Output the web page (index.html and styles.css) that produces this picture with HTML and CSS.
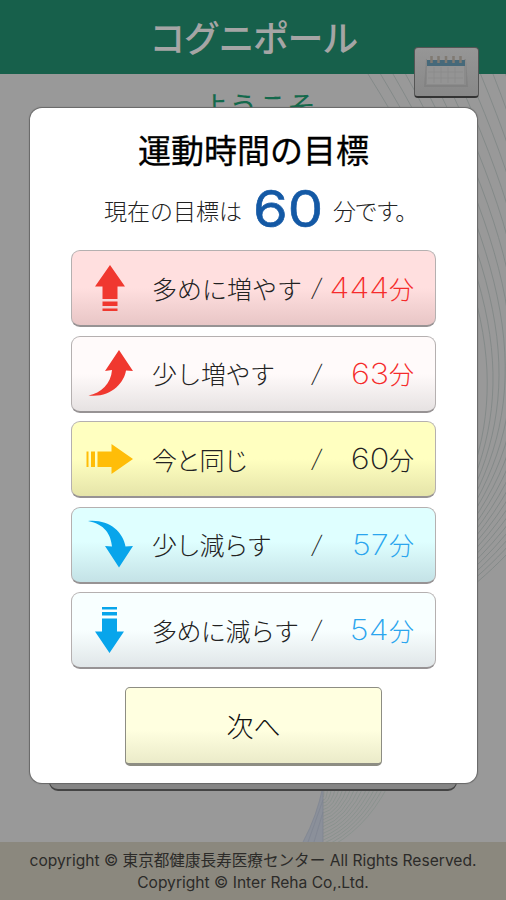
FILE: index.html
```html
<!DOCTYPE html>
<html lang="ja">
<head>
  <meta charset="utf-8">
  <title>コグニポール</title>
  <link rel="stylesheet" href="styles.css">
</head>
<body>
  <div class="screen">
    <header class="header">
      <h1 class="app-title">コグニポール</h1>
    </header>
    <main class="main">
      <svg class="waves" width="506" height="768" viewBox="0 74 506 768" fill="none">
        <g id="waves-side" stroke="#848a89" stroke-width="1"></g>
        <g id="waves-bottom" stroke="#87908c" stroke-width="0.8"></g>
        <path d="M323 786Q317 816 303 842H323Z" fill="#8b909a"/>
        <path d="M323 786Q317 816 303 842M323 786V842M323 800L308 842M323 812L314 842" stroke="#7e8490" stroke-width="0.7"/>
      </svg>
      <p class="welcome">ようこそ</p>
      <div class="back-button"></div>
    </main>
    <footer class="footer">
      <p class="copy">copyright © 東京都健康長寿医療センター All Rights Reserved.</p>
      <p class="copy">Copyright © Inter Reha Co,.Ltd.</p>
    </footer>

    <div class="calendar-button">
      <svg width="52" height="38" viewBox="0 0 52 38">
        <path d="M6 7H46L48 35H4Z" fill="#7d7d7d" opacity="0.6"/>
        <path d="M7 6H43L46 9V33H6Z" fill="#8b8b8b"/>
        <path d="M7 6H44V32H7Z" fill="#949494"/>
        <path d="M7 8H45V14H7Z" fill="#46697a"/>
        <path d="M8 20H43M8 26H43M14 15V31M21 15V31M28 15V31M35 15V31" stroke="#8c8c8c" stroke-width="0.8"/>
        <path d="M11.500 4V11M18.500 4V11M26 4V11M33.500 4V11M40.500 4V11" stroke="#807a72" stroke-width="2.500"/>
      </svg>
    </div>

    <section class="modal">
      <h2 class="modal-title">運動時間の目標</h2>
      <div class="current">
        <span class="current-before">現在の目標は</span>
        <span class="current-value">60</span>
        <span class="current-after">分です。</span>
      </div>

      <div class="options">
        <button class="option more-much">
          <svg class="arrow" width="52" height="54" viewBox="0 0 52 54">
            <path d="M27 4L42 25.500H34.500V38H19.500V25.500H12ZM19.500 40.500H34.500V45H19.500ZM19.500 47.500H34.500V50H19.500Z"/>
          </svg>
          <span class="label">多めに増やす</span><span class="slash">/</span>
          <span class="minutes"><span class="num">444</span>分</span>
        </button>
        <button class="option more-little">
          <svg class="arrow" width="52" height="54" viewBox="0 0 52 54">
            <path d="M36 4L50 25L43 24.500C41 37 28 52 5.500 49.500C18 47 28 38 29 24L22 25Z"/>
          </svg>
          <span class="label">少し増やす</span><span class="slash">/</span>
          <span class="minutes"><span class="num">63</span>分</span>
        </button>
        <button class="option same">
          <svg class="arrow" width="52" height="54" viewBox="0 0 52 54">
            <path d="M3.500 19.500H5.500V35H3.500ZM8 19.500H12V35H8ZM14.500 19.500H28.500V12L50 27L28.500 42V35H14.500Z"/>
          </svg>
          <span class="label">今と同じ</span><span class="slash">/</span>
          <span class="minutes"><span class="num">60</span>分</span>
        </button>
        <button class="option less-little">
          <svg class="arrow" width="52" height="54" viewBox="0 0 52 54">
            <path d="M5 4C25 2 40 14 42.500 29.500L50 29L36 50.500L22 29L29 29.500C28 18 22 7 5 4Z"/>
          </svg>
          <span class="label">少し減らす</span><span class="slash">/</span>
          <span class="minutes"><span class="num">57</span>分</span>
        </button>
        <button class="option less-much">
          <svg class="arrow" width="52" height="54" viewBox="0 0 52 54">
            <path d="M19 4H34V6.500H19ZM19 9H34V12.500H19ZM19 15.500H34V28.500H41L26.500 50L12 28.500H19Z"/>
          </svg>
          <span class="label">多めに減らす</span><span class="slash">/</span>
          <span class="minutes"><span class="num">54</span>分</span>
        </button>
      </div>

      <button class="next">次へ</button>
    </section>
  </div>

  <script>
    // Draw the fans of thin lines in the page background
    function addLines(id, count, makePath) {
      const group = document.getElementById(id);
      for (let i = 0; i < count; i++) {
        const path = document.createElementNS('http://www.w3.org/2000/svg', 'path');
        path.setAttribute('d', makePath(i));
        group.appendChild(path);
      }
    }

    addLines('waves-side', 18, i => {
      const x = 368 + i * 12.5;
      return `M${x} 74C${x + 135 - i * 5} ${290} ${510 + i * 7} ${400 + i * 4} 455 ${515 + i * 5}`;
    });
    addLines('waves-bottom', 17, i => {
      return `M${324 + i * 4} 786Q${324 + i * 2.5} ${800 + i * 2} 323 ${796 + i * 3.4}`;
    });
  </script>
</body>
</html>
```

FILE: styles.css
```css
* {
  margin: 0;
  padding: 0;
  box-sizing: border-box;
}

body {
  font-family: 'Noto Sans CJK JP', sans-serif;
  font-weight: 300;
  color: #222;
}

.screen {
  position: relative;
  width: 506px;
  height: 900px;
  display: flex;
  flex-direction: column;
  overflow: hidden;
  background: #999;
}

.header {
  height: 74px;
  background: #17604b;
  text-align: center;
}

.app-title {
  font-size: 36px;
  font-weight: 500;
  line-height: 72px;
  letter-spacing: -1.4px;
  color: #a5a5a5;
}

.main {
  position: relative;
  flex: 1;
  display: flex;
  flex-direction: column;
  align-items: center;
}

.waves {
  position: absolute;
  top: 0;
  left: 0;
}

.welcome {
  position: relative;
  padding-left: 10px;
  font-size: 29px;
  font-weight: 400;
  line-height: 62px;
  color: #14694c;
}

.back-button {
  position: relative;
  width: 408px;
  height: 60px;
  margin-top: auto;
  margin-bottom: 51px;
  background: #858585;
  border: 1px solid #444;
  border-bottom: 2px solid #444;
  border-radius: 9px;
}

.footer {
  height: 58px;
  padding-top: 8px;
  background: #8b887e;
  color: #2c2b29;
  text-align: center;
}

.copy {
  font-family: Inter, 'Noto Sans CJK JP', sans-serif;
  font-size: 15.6px;
  font-weight: 400;
  line-height: 22px;
  white-space: nowrap;
}

.calendar-button {
  position: absolute;
  top: 47px;
  left: 414px;
  width: 65px;
  height: 51px;
  padding: 4px 5px;
  background: linear-gradient(#969696, #888);
  border: 1px solid #555;
  border-bottom: 2px solid #333;
  border-radius: 4px;
}

.modal {
  position: absolute;
  top: 108px;
  left: 30px;
  width: 447px;
  height: 675px;
  display: flex;
  flex-direction: column;
  align-items: center;
  background: #fff;
  border-radius: 12px;
  box-shadow: 0 0 1px 1px #666;
}

.modal-title {
  height: 76px;
  font-size: 33px;
  font-weight: 400;
  line-height: 82px;
  color: #000;
  -webkit-text-stroke: 0.3px #000;
}

.current {
  height: 66px;
  width: 100%;
  display: flex;
  padding-left: 74px;
  font-size: 23px;
  line-height: 52px;
  white-space: nowrap;
}

.current-before {
  width: 149px;
}

.current-value {
  width: 80px;
  font-family: Inter, sans-serif;
  font-size: 51px;
  font-weight: 400;
  line-height: 50px;
  color: #1459a5;
  -webkit-text-stroke: 0.6px #1459a5;
  transform: scaleX(1.1);
  transform-origin: left;
}

.current-after {
  letter-spacing: -1.5px;
}

.options {
  display: flex;
  flex-direction: column;
  gap: 8.5px;
}

.option {
  display: flex;
  align-items: center;
  width: 365px;
  height: 77px;
  padding: 0 0 1px 11px;
  border: 1px solid #b5b0b0;
  border-bottom: 2px solid #979394;
  border-radius: 9px;
  font-family: inherit;
  font-size: 25px;
  font-weight: 300;
  color: #222;
  white-space: nowrap;
}

.arrow {
  flex: none;
  margin-right: 17px;
}

.label {
  width: 158px;
  text-align: left;
}

.slash {
  width: 14px;
  padding-bottom: 5px;
  font-size: 22px;
  transform: skewX(-8deg);
}

.minutes {
  flex: 1;
  display: flex;
  align-items: center;
  justify-content: flex-end;
  padding-right: 21px;
}

.num {
  font-family: Inter, sans-serif;
  font-size: 29px;
  font-weight: 200;
  transform: scaleX(1.12);
  transform-origin: right;
}

.more-much {
  background: linear-gradient(#ffdfdf 50%, #e8c6c6);
}

.more-little {
  background: linear-gradient(#fffafa 50%, #e6e2e2);
}

.same {
  background: linear-gradient(#ffffc0 50%, #e5e4a9);
}

.less-little {
  background: linear-gradient(#dfffff 45%, #c4e2e6);
}

.less-much {
  background: linear-gradient(#f8ffff 50%, #e0e6e8);
}

.more-little .label,
.less-much .label {
  letter-spacing: -0.5px;
}

.same .label,
.less-little .label {
  letter-spacing: -1.2px;
}

.more-much .arrow,
.more-little .arrow {
  fill: #f0382f;
}

.same .arrow {
  fill: #ffbd08;
}

.less-little .arrow,
.less-much .arrow {
  fill: #08a5eb;
}

.more-much .minutes,
.more-little .minutes {
  color: #f52b2b;
}

.less-little .minutes,
.less-much .minutes {
  color: #2ba5ee;
}

.next {
  width: 257px;
  height: 79px;
  margin-top: 18px;
  background: linear-gradient(#ffffe0 55%, #ebebc9);
  border: 1px solid #8d8d83;
  border-bottom: 3px solid #8d8d83;
  border-radius: 5px;
  font-family: inherit;
  font-size: 27px;
  font-weight: 300;
  color: #111;
}
```
